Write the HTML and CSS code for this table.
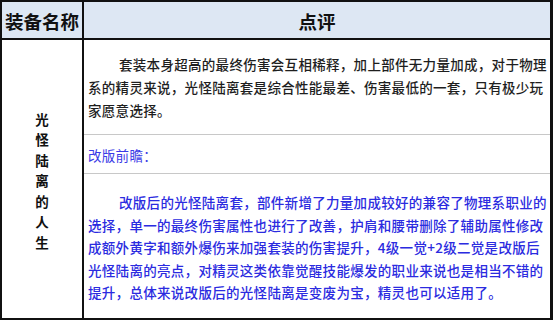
FILE: index.html
```html
<!DOCTYPE html>
<html lang="zh">
<head>
<meta charset="utf-8">
<title>装备点评</title>
<link rel="stylesheet" href="styles.css">
</head>
<body>
<div class="sheet">
  <div class="head head-name">装备名称</div>
  <div class="head head-review">点评</div>
  <div class="name"><span class="name-text">光怪陆离的人生</span></div>
  <div class="cell cell-first">
    <p class="para">套装本身超高的最终伤害会互相稀释，加上部件无力量加成，对于物理系的精灵来说，光怪陆离套是综合性能最差、伤害最低的一套，只有极少玩家愿意选择。</p>
  </div>
  <div class="cell cell-label">
    <p class="label">改版前瞻：</p>
  </div>
  <div class="cell cell-last">
    <p class="para para-blue">改版后的光怪陆离套，部件新增了力量加成较好的兼容了物理系职业的选择，单一的最终伤害属性也进行了改善，护肩和腰带删除了辅助属性修改成额外黄字和额外爆伤来加强套装的伤害提升，4级一觉+2级二觉是改版后光怪陆离的亮点，对精灵这类依靠觉醒技能爆发的职业来说也是相当不错的提升，总体来说改版后的光怪陆离是变废为宝，精灵也可以适用了。</p>
  </div>
</div>
</body>
</html>
```

FILE: styles.css
```css
html, body {
  margin: 0;
  padding: 0;
  background: #ffffff;
}

body {
  font-family: "Noto Sans CJK SC", "Noto Sans", sans-serif;
  color: #222222;
}

.sheet {
  box-sizing: border-box;
  width: 553px;
  height: 320px;
  border: 2px solid #111111;
  display: grid;
  grid-template-columns: 80px 2px 466px;
  grid-template-rows: 36px 2px 94px 1px 38px 1px 144px;
  background: #111111;
  gap: 0;
}

.head {
  background: #dde7f3;
  font-weight: 700;
  font-size: 18.5px;
  color: #111111;
  display: flex;
  align-items: center;
  justify-content: center;
  padding-top: 3px;
  box-sizing: border-box;
  line-height: 1;
}

.head-name {
  grid-column: 1;
  grid-row: 1;
}

.head-review {
  grid-column: 3;
  grid-row: 1;
}

.name {
  grid-column: 1;
  grid-row: 3 / 8;
  background: #ffffff;
  display: flex;
  align-items: center;
  justify-content: center;
  padding-top: 3px;
  box-sizing: border-box;
}

.name-text {
  width: 1em;
  font-size: 13.5px;
  font-weight: 700;
  line-height: 20.5px;
  color: #111111;
  text-align: center;
}

.cell {
  grid-column: 3;
  background: #ffffff;
  display: flex;
  align-items: center;
  padding: 0 0 0 4px;
  box-sizing: border-box;
}

.cell-first {
  grid-row: 3;
  padding-top: 1px;
}

.cell-label {
  grid-row: 5;
}

.cell-last {
  grid-row: 7;
  padding-top: 3px;
}

.sheet::before,
.sheet::after {
  content: "";
  grid-column: 3;
  background: #c8c8c8;
}

.sheet::before {
  grid-row: 4;
}

.sheet::after {
  grid-row: 6;
}

.para {
  margin: 0;
  font-size: 13.5px;
  font-weight: 500;
  letter-spacing: 0.3px;
  line-height: 22.8px;
  text-indent: 31px;
  color: #1e1e1e;
}

.para-blue {
  color: #2b2be0;
  line-height: 22.6px;
}

.label {
  margin: 0;
  font-size: 13.5px;
  letter-spacing: 0.3px;
  color: #3a3ae6;
  padding-top: 2px;
}
```
